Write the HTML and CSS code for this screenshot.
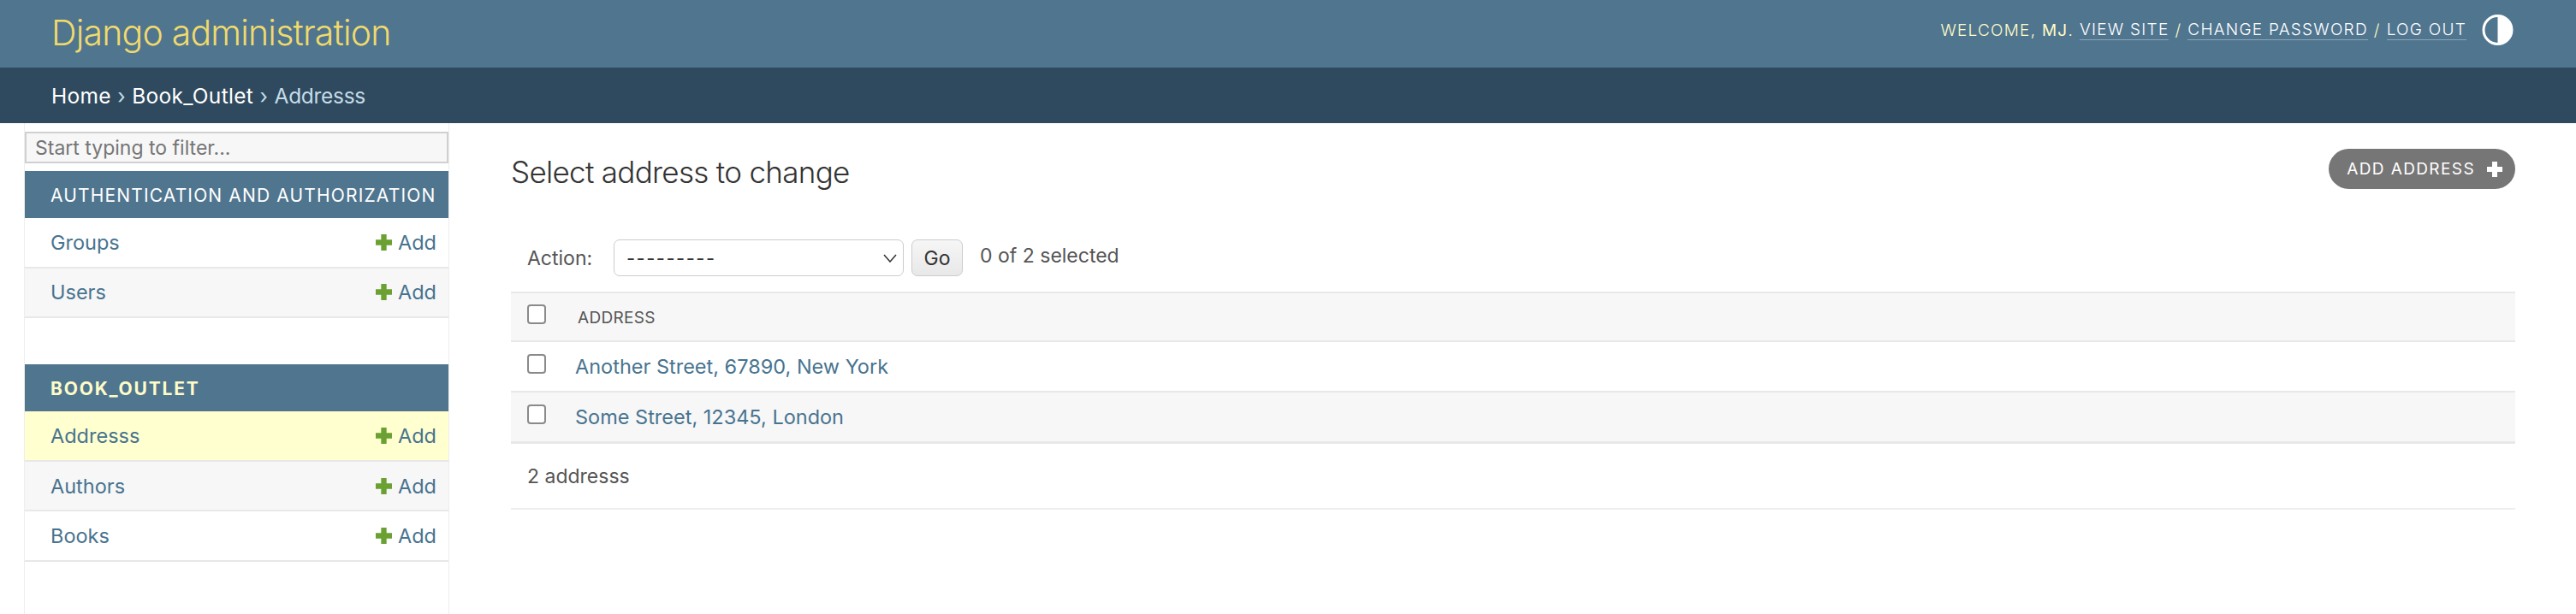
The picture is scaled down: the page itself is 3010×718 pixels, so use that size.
FILE: index.html
```html
<!DOCTYPE html>
<html lang="en">
<head>
    <meta charset="UTF-8">
    <title>Select address to change | Django site admin</title>
    <link rel="stylesheet" href="styles.css">
</head>
<body>
    <header class="site-header">
        <div class="branding">Django administration</div>
        <div class="user-tools">
            <span>Welcome, <strong>MJ</strong>.</span>
            <a href="#">View site</a>
            <span class="sep">/</span>
            <a href="#">Change password</a>
            <span class="sep">/</span>
            <a href="#">Log out</a>
            <svg class="theme-toggle" viewBox="0 0 36 36" width="37" height="36">
                <circle cx="18" cy="18" r="16.5" fill="none" stroke="#fff" stroke-width="3"/>
                <path d="M18 2a16 16 0 0 1 0 32z" fill="#fff"/>
            </svg>
        </div>
    </header>

    <nav class="breadcrumbs">
        <a href="#">Home</a><span class="crumb-sep">›</span><a href="#">Book_Outlet</a><span class="crumb-sep">›</span><span class="crumb-current">Addresss</span>
    </nav>

    <div class="page">
        <aside class="sidebar">
            <input class="nav-filter" type="text" placeholder="Start typing to filter...">

            <div class="app-caption">Authentication and Authorization</div>
            <div class="model-row">
                <a href="#">Groups</a>
                <a href="#" class="add-link"><svg class="plus" viewBox="0 0 18 18"><path d="M6 0h6v6h6v6h-6v6H6v-6H0V6h6z"/></svg>Add</a>
            </div>
            <div class="model-row alt">
                <a href="#">Users</a>
                <a href="#" class="add-link"><svg class="plus" viewBox="0 0 18 18"><path d="M6 0h6v6h6v6h-6v6H6v-6H0V6h6z"/></svg>Add</a>
            </div>

            <div class="app-caption current second">Book_Outlet</div>
            <div class="model-row selected">
                <a href="#">Addresss</a>
                <a href="#" class="add-link"><svg class="plus" viewBox="0 0 18 18"><path d="M6 0h6v6h6v6h-6v6H6v-6H0V6h6z"/></svg>Add</a>
            </div>
            <div class="model-row alt">
                <a href="#">Authors</a>
                <a href="#" class="add-link"><svg class="plus" viewBox="0 0 18 18"><path d="M6 0h6v6h6v6h-6v6H6v-6H0V6h6z"/></svg>Add</a>
            </div>
            <div class="model-row">
                <a href="#">Books</a>
                <a href="#" class="add-link"><svg class="plus" viewBox="0 0 18 18"><path d="M6 0h6v6h6v6h-6v6H6v-6H0V6h6z"/></svg>Add</a>
            </div>
        </aside>

        <main class="content">
            <div class="title-row">
                <h1>Select address to change</h1>
                <a href="#" class="add-button">Add address<svg class="plus-white" viewBox="0 0 18 18"><path d="M6 0h6v6h6v6h-6v6H6v-6H0V6h6z"/></svg></a>
            </div>

            <div class="actions">
                <label class="action-label">Action:</label>
                <div class="select-wrap">
                    <select class="action-select"><option>---------</option></select>
                    <svg class="chevron" viewBox="0 0 16 10"><path d="M1 1l7 8 7-8" fill="none" stroke="#333" stroke-width="1.5"/></svg>
                </div>
                <button class="go-button">Go</button>
                <span class="action-counter">0 of 2 selected</span>
            </div>

            <div class="result-table">
                <div class="result-row head">
                    <input type="checkbox" class="row-check">
                    <span class="head-label">Address</span>
                </div>
                <div class="result-row">
                    <input type="checkbox" class="row-check">
                    <a href="#">Another Street, 67890, New York</a>
                </div>
                <div class="result-row alt last">
                    <input type="checkbox" class="row-check">
                    <a href="#">Some Street, 12345, London</a>
                </div>
            </div>

            <p class="paginator">2 addresss</p>
        </main>
    </div>
</body>
</html>
```

FILE: styles.css
```css
:root {
    --header-bg: #50758f;
    --crumbs-bg: #2f4a5e;
    --link: #48738f;
    --yellow: #f0da6c;
    --pale-yellow: #fefcc8;
    --border: #e8e8e8;
    --row-alt: #f7f7f7;
    --text: #555;
}

html, body {
    height: 100%;
}

body {
    margin: 0;
    overflow: hidden;
    background: #fff;
    color: #333;
    font-family: Inter, "Liberation Sans", sans-serif;
    font-size: 22px;
}

a {
    color: var(--link);
    text-decoration: none;
}

.site-header {
    height: 79px;
    box-sizing: border-box;
    display: flex;
    justify-content: space-between;
    align-items: flex-start;
    padding: 0 73px 0 60px;
    background: var(--header-bg);
}

.branding {
    margin-top: 13px;
    line-height: 50px;
    color: var(--yellow);
    font-size: 41px;
    font-weight: 300;
    letter-spacing: -0.8px;
}

.user-tools {
    display: flex;
    align-items: center;
    gap: 7px;
    margin-top: 17px;
    color: var(--pale-yellow);
    font-size: 19px;
    font-weight: 300;
    letter-spacing: 1.25px;
    text-transform: uppercase;
}

.user-tools strong {
    font-weight: 400;
}

.user-tools a {
    color: #fff;
    border-bottom: 1px solid rgba(255, 255, 255, 0.35);
}

.theme-toggle {
    margin-left: 11px;
}

.breadcrumbs {
    height: 65px;
    box-sizing: border-box;
    display: flex;
    align-items: center;
    padding: 0 60px;
    background: var(--crumbs-bg);
    color: #c4dce8;
    font-size: 24.5px;
    font-weight: 400;
}

.breadcrumbs a {
    color: #fff;
    letter-spacing: 0.3px;
}

.crumb-sep {
    margin: 0 7.5px;
}

.crumb-current {
    color: #c4dce8;
    letter-spacing: -0.3px;
}

.page {
    display: flex;
    align-items: stretch;
    height: calc(100% - 144px);
    padding-left: 28px;
}

.sidebar {
    width: 497px;
    flex-shrink: 0;
    box-sizing: border-box;
    padding-top: 10px;
    border-left: 1px solid #eee;
    border-right: 1px solid #eee;
}

.nav-filter {
    display: block;
    width: 100%;
    height: 37px;
    box-sizing: border-box;
    margin-bottom: 9px;
    padding: 0 10px;
    border: 2px solid #d0d0d0;
    background: var(--row-alt);
    font-family: inherit;
    font-size: 23px;
    font-weight: 400;
}

.nav-filter::placeholder {
    color: #757575;
}

.app-caption {
    height: 55px;
    display: flex;
    align-items: center;
    padding-left: 30px;
    padding-top: 1px;
    box-sizing: border-box;
    background: var(--header-bg);
    color: #fff;
    font-size: 21px;
    font-weight: 400;
    letter-spacing: 1.15px;
    text-transform: uppercase;
    white-space: nowrap;
}

.app-caption.current {
    color: var(--pale-yellow);
    font-weight: 700;
    letter-spacing: 1.8px;
}

.app-caption.second {
    margin-top: 54px;
}

.model-row {
    height: 58.6px;
    box-sizing: border-box;
    display: flex;
    justify-content: space-between;
    align-items: center;
    padding: 0 14px 0 30px;
    border-bottom: 2px solid var(--border);
    font-size: 23.5px;
}

.model-row.alt {
    background: var(--row-alt);
}

.model-row.selected {
    background: #ffffd0;
}

.add-link {
    display: flex;
    align-items: center;
    gap: 7px;
}

.plus {
    width: 19px;
    height: 19px;
    fill: #6ba032;
}

.content {
    flex: 1;
    padding: 0 71px 0 72px;
}

.title-row {
    display: flex;
    justify-content: space-between;
    height: 136px;
    box-sizing: border-box;
    padding-top: 30px;
}

h1 {
    margin: -2px 0 0;
    font-size: 35px;
    font-weight: 300;
    line-height: 58px;
    color: #333;
    letter-spacing: -0.7px;
}

.add-button {
    height: 47px;
    display: flex;
    align-items: center;
    gap: 14px;
    box-sizing: border-box;
    padding: 0 15px 0 21px;
    border-radius: 24px;
    background: #767676;
    color: #fff;
    font-size: 19px;
    font-weight: 400;
    letter-spacing: 1.4px;
    text-transform: uppercase;
}

.plus-white {
    width: 18px;
    height: 18px;
    fill: #fff;
}

.actions {
    display: flex;
    align-items: center;
    height: 43px;
    padding-left: 19px;
    margin-bottom: 18px;
}

.action-label {
    width: 101px;
    color: var(--text);
    font-size: 23px;
}

.select-wrap {
    position: relative;
}

.action-select {
    display: block;
    width: 339px;
    height: 43px;
    box-sizing: border-box;
    padding: 0 14px;
    appearance: none;
    border: 1px solid #ccc;
    border-radius: 7px;
    background: #fff;
    color: #333;
    font-family: inherit;
    font-size: 22px;
    letter-spacing: 1.5px;
}

.chevron {
    position: absolute;
    top: 17px;
    right: 8px;
    width: 16px;
    height: 10px;
}

.go-button {
    width: 60px;
    height: 43px;
    margin-left: 9px;
    padding: 0;
    border: 1px solid #ccc;
    border-radius: 7px;
    background: linear-gradient(#f6f6f6, #e8e8e8);
    color: #333;
    font-family: inherit;
    font-size: 23px;
}

.action-counter {
    margin-left: 20px;
    margin-top: -5px;
    color: var(--text);
    font-size: 23px;
}

.result-table {
    border-top: 2px solid var(--border);
}

.result-row {
    height: 58.5px;
    box-sizing: border-box;
    display: flex;
    align-items: center;
    padding-left: 19px;
    border-bottom: 2px solid var(--border);
    font-size: 23.5px;
}

.result-row.head {
    height: 57px;
    background: var(--row-alt);
}

.result-row.alt {
    background: var(--row-alt);
}

.result-row.last {
    height: 60px;
    border-bottom-width: 3px;
}

.row-check {
    width: 22px;
    height: 23px;
    margin: -6px 34px 0 0;
    appearance: none;
    border: 2px solid #8a8a8a;
    border-radius: 4px;
    background: #fff;
}

.head-label {
    margin-left: 3px;
    padding-top: 2px;
    color: var(--text);
    font-size: 19px;
    letter-spacing: 0.3px;
    text-transform: uppercase;
}

.paginator {
    height: 77px;
    margin: 0;
    box-sizing: border-box;
    padding: 24px 0 0 19px;
    border-bottom: 2px solid #eee;
    color: var(--text);
    font-size: 23px;
}
```
